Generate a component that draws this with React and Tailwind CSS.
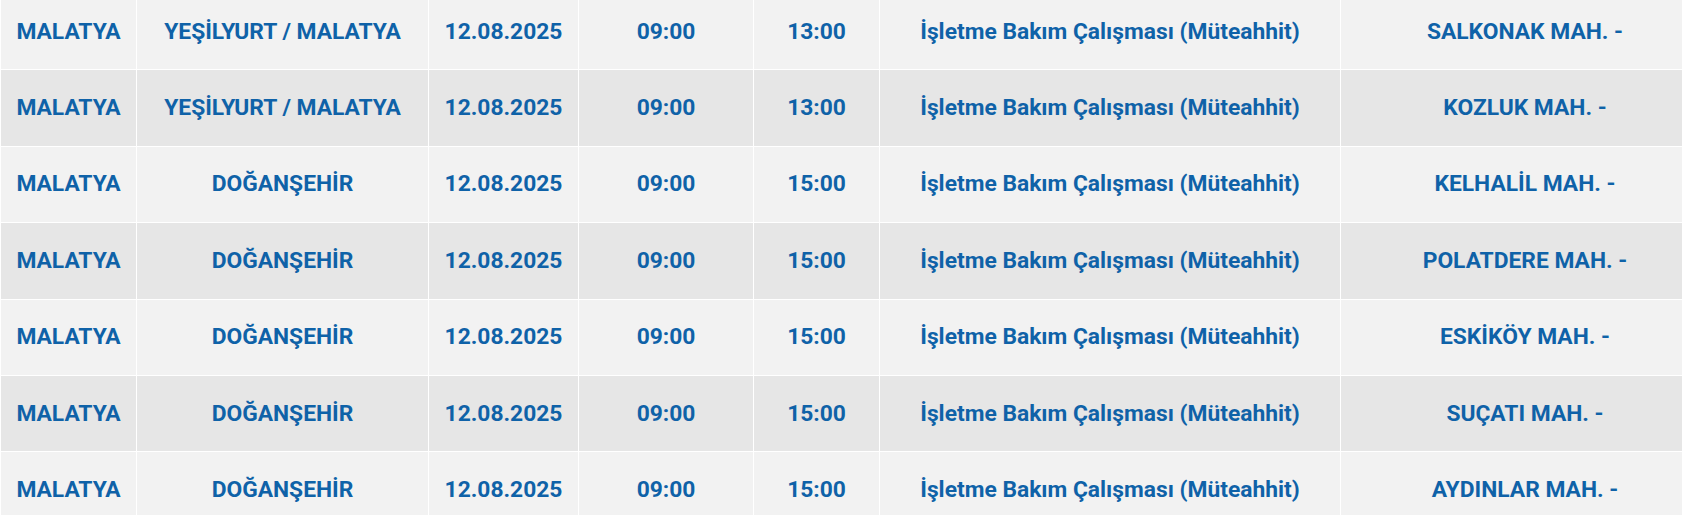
import React from "react";

const ROWS = [
  ["MALATYA", "YEŞİLYURT / MALATYA", "12.08.2025", "09:00", "13:00", "İşletme Bakım Çalışması (Müteahhit)", "SALKONAK MAH. -"],
  ["MALATYA", "YEŞİLYURT / MALATYA", "12.08.2025", "09:00", "13:00", "İşletme Bakım Çalışması (Müteahhit)", "KOZLUK MAH. -"],
  ["MALATYA", "DOĞANŞEHİR", "12.08.2025", "09:00", "15:00", "İşletme Bakım Çalışması (Müteahhit)", "KELHALİL MAH. -"],
  ["MALATYA", "DOĞANŞEHİR", "12.08.2025", "09:00", "15:00", "İşletme Bakım Çalışması (Müteahhit)", "POLATDERE MAH. -"],
  ["MALATYA", "DOĞANŞEHİR", "12.08.2025", "09:00", "15:00", "İşletme Bakım Çalışması (Müteahhit)", "ESKİKÖY MAH. -"],
  ["MALATYA", "DOĞANŞEHİR", "12.08.2025", "09:00", "15:00", "İşletme Bakım Çalışması (Müteahhit)", "SUÇATI MAH. -"],
  ["MALATYA", "DOĞANŞEHİR", "12.08.2025", "09:00", "15:00", "İşletme Bakım Çalışması (Müteahhit)", "AYDINLAR MAH. -"],
];

export default function App() {
  return (
    <div className="w-[1682px] h-[515px] overflow-hidden bg-white">
      <div
        className="w-[1710px] -mt-[6px] pl-px bg-white grid grid-cols-[135px_291px_149px_174px_125px_460px_368px] auto-rows-[75.4px] gap-px text-[#0f62a8] text-[22.8px] font-bold"
        style={{ fontFamily: "Roboto, 'Liberation Sans', sans-serif" }}
      >
        {ROWS.map((row, r) =>
          row.map((cell, c) => (
            <div
              key={`${r}-${c}`}
              className={`flex items-center justify-center whitespace-nowrap ${r % 2 === 0 ? "bg-[#f2f2f2]" : "bg-[#e6e6e6]"}`}
            >
              {cell}
            </div>
          ))
        )}
      </div>
    </div>
  );
}
